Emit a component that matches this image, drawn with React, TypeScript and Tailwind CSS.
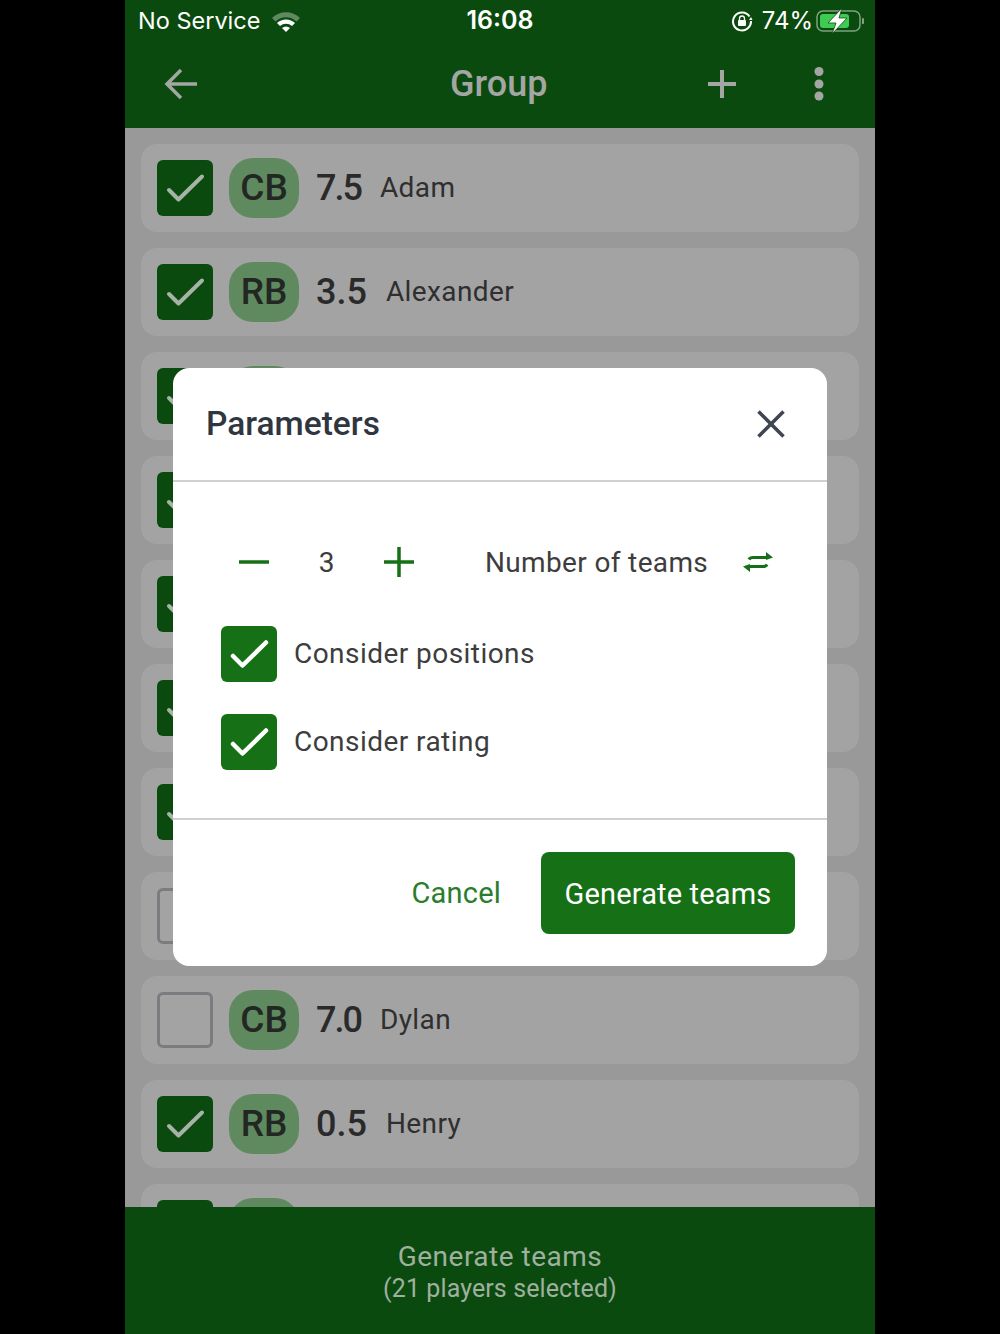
import React from 'react';

type Player = {
  checked: boolean;
  pos?: string;
  rating?: string;
  name?: string;
  tight?: boolean;
};

// rows with no text sit behind the dialog or the bottom bar
const players: Player[] = [
  { checked: true, pos: 'CB', rating: '7.5', name: 'Adam', tight: true },
  { checked: true, pos: 'RB', rating: '3.5', name: 'Alexander' },
  { checked: true },
  { checked: true },
  { checked: true },
  { checked: true },
  { checked: true },
  { checked: false },
  { checked: false, pos: 'CB', rating: '7.0', name: 'Dylan', tight: true },
  { checked: true, pos: 'RB', rating: '0.5', name: 'Henry' },
  { checked: true },
];

const Check = ({ color, width }: { color: string; width: number }) => (
  <svg viewBox="0 0 56 56" className="w-14 h-14" fill="none">
    <path d="M12 30 L21.5 39.5 L45 16.5" stroke={color} strokeWidth={width} strokeLinecap="round" strokeLinejoin="round" />
  </svg>
);

const PlayerRow = ({ player }: { player: Player }) => (
  <div className="flex items-center h-[88px] shrink-0 rounded-2xl bg-[#a3a3a3] pl-4">
    {player.checked ? (
      <div className="w-14 h-14 rounded-md bg-[#0b4a0e]">
        <Check color="#a6b3a6" width={4} />
      </div>
    ) : (
      <div className="w-14 h-14 rounded-md border-[3px] border-[#7b7b80]" />
    )}
    <div className="ml-4 w-[70px] h-[60px] rounded-[24px] bg-[#5f8a60] flex items-center justify-center text-[37px] font-medium text-[#232723]">
      {player.pos}
    </div>
    {player.rating && (
      <div className={`ml-[17px] text-[36px] font-medium text-[#2a2a2a] ${player.tight ? 'tracking-[-2px]' : ''}`}>
        {player.rating}
      </div>
    )}
    {player.name && <div className="ml-[19px] text-[28px] tracking-[0.4px] text-[#2f2f2f]">{player.name}</div>}
  </div>
);

const Option = ({ label }: { label: string }) => (
  <div className="flex items-center h-14">
    <div className="w-14 h-14 rounded-md bg-[#167016]">
      <Check color="#ffffff" width={4.5} />
    </div>
    <span className="ml-[17px] text-[28px] tracking-[0.45px] text-[#3d3d3d]">{label}</span>
  </div>
);

const StatusBar = () => (
  <div className="relative flex items-center justify-between h-[42px] pl-[13px] pr-[11px] text-white">
    <div className="flex items-center gap-[11px] text-[23.5px] font-['Inter',sans-serif]">
      No Service
      <svg viewBox="0 0 30 22" className="w-[30px] h-[22px]">
        <path d="M1 8 A20 20 0 0 1 29 8 L25.5 11.5 A15 15 0 0 0 4.5 11.5 Z" fill="#5f8a60" />
        <path d="M6 13 A13 13 0 0 1 24 13 L21 16 A9 9 0 0 0 9 16 Z" fill="#ffffff" />
        <path d="M11 18 A6 6 0 0 1 19 18 L15 22 Z" fill="#ffffff" />
      </svg>
    </div>
    <div className="absolute left-0 right-0 text-center text-[25px] font-semibold font-['Inter',sans-serif]">16:08</div>
    <div className="flex items-center text-[24px] font-['Inter',sans-serif]">
      <svg viewBox="0 0 22 22" className="w-[22px] h-[22px] mr-[9px]" fill="none">
        <path d="M18.5 6.5 A9 9 0 1 0 20 11" stroke="#ffffff" strokeWidth="2" />
        <path d="M21.5 10 L18 10 L20 7 Z" fill="#ffffff" />
        <rect x="7" y="10" width="8" height="6" rx="1" fill="#ffffff" />
        <path d="M8.5 10 V8.5 a2.5 2.5 0 0 1 5 0 V10" stroke="#ffffff" strokeWidth="1.3" />
      </svg>
      74%
      <svg viewBox="0 0 48 26" className="w-12 h-[26px] ml-[3px]" fill="none">
        <rect x="1" y="3" width="43" height="20" rx="6" stroke="#7fa37f" strokeWidth="1.5" />
        <rect x="4" y="6" width="29" height="14" rx="3" fill="#3ecb54" />
        <path d="M46 10 a3 3 0 0 1 0 6 Z" fill="#7fa37f" />
        <path d="M26 0 L12 15 H20 L16 26 L31 10 H23 Z" fill="#ffffff" stroke="#0b4a0e" strokeWidth="0.8" />
      </svg>
    </div>
  </div>
);

export default function App() {
  return (
    <div className="w-full h-[1334px] bg-black font-['Roboto',sans-serif]">
      <div className="relative w-[750px] h-[1334px] mx-auto overflow-hidden flex flex-col bg-[#999999]">
        {/* Header */}
        <div className="h-[128px] shrink-0 bg-[#0b4a0e]">
          <StatusBar />
          <div className="flex items-center h-[84px] pl-[38px] pr-[51px] text-[#a3a6a3]">
            <svg viewBox="0 0 36 36" className="w-9 h-9" fill="none" stroke="currentColor" strokeWidth="3.5">
              <path d="M34 18 H5 M18 4 L4 18 L18 32" />
            </svg>
            <div className="ml-[251px] text-[36px] font-medium">Group</div>
            <div className="flex items-center ml-auto gap-[77px]">
              <svg viewBox="0 0 30 30" className="w-[30px] h-[30px]" fill="none" stroke="currentColor" strokeWidth="4">
                <path d="M15 1 V29 M1 15 H29" />
              </svg>
              <svg viewBox="0 0 10 36" className="w-[10px] h-9" fill="currentColor">
                <circle cx="5" cy="5.5" r="4.5" />
                <circle cx="5" cy="18" r="4.5" />
                <circle cx="5" cy="30" r="4.5" />
              </svg>
            </div>
          </div>
        </div>

        {/* Players */}
        <div className="flex-1 min-h-0 overflow-hidden flex flex-col gap-4 pt-4 px-4">
          {players.map((player, i) => (
            <PlayerRow key={i} player={player} />
          ))}
        </div>

        {/* Bottom bar */}
        <div className="h-[127px] shrink-0 bg-[#0b4a0e] text-center text-[#9fb09f] pt-[33px]">
          <div className="text-[28px] leading-[33px] tracking-[0.5px]">Generate teams</div>
          <div className="pt-[1px] text-[25px] leading-[30px] tracking-[0.1px]">(21 players selected)</div>
        </div>

        {/* Dialog */}
        <div className="absolute left-12 top-[368px] w-[654px] h-[598px] rounded-2xl bg-white flex flex-col">
          <div className="flex items-center justify-between h-[112px] pl-[33px] pr-[42px] border-b-2 border-[#d0d0d0] box-content">
            <span className="text-[33.5px] font-medium text-[#2f3640]">Parameters</span>
            <svg viewBox="0 0 28 28" className="w-7 h-7" fill="none" stroke="#3f4650" strokeWidth="3.6">
              <path d="M1.5 1.5 L26.5 26.5 M26.5 1.5 L1.5 26.5" />
            </svg>
          </div>

          <div className="flex-1 min-h-0 border-b-2 border-[#d0d0d0] pl-12">
            <div className="flex items-center h-[60px] mt-[50px] text-[#3d3d3d] text-[28px]">
              <svg viewBox="0 0 30 30" className="ml-[18px] w-[30px] h-[30px]" fill="none" stroke="#167016" strokeWidth="3.5">
                <path d="M0 15 H30" />
              </svg>
              <span className="w-[115px] text-center pt-[2px]">3</span>
              <svg viewBox="0 0 30 30" className="w-[30px] h-[30px]" fill="none" stroke="#167016" strokeWidth="3.5">
                <path d="M15 0 V30 M0 15 H30" />
              </svg>
              <span className="ml-[71px] tracking-[0.35px] pt-[2px]">Number of teams</span>
              <svg viewBox="0 0 30 24" className="ml-[35px] w-[30px] h-6" fill="none" stroke="#167016" strokeWidth="3">
                <path d="M6 9.5 C7 7.5 8 7.5 10 7.5 H24" />
                <path d="M23 2 L30 7.5 L23 10 Z" fill="#167016" stroke="none" />
                <path d="M24 14.5 C23 16.5 22 16.5 20 16.5 H6" />
                <path d="M7 14 L0 16.5 L7 22 Z" fill="#167016" stroke="none" />
              </svg>
            </div>
            <div className="flex flex-col gap-8 mt-[34px]">
              <Option label="Consider positions" />
              <Option label="Consider rating" />
            </div>
          </div>

          <div className="flex items-center justify-end h-[146px] shrink-0 pr-8">
            <span className="pt-[2px] text-[29px] text-[#2a7d2c] tracking-[0.2px]">Cancel</span>
            <div className="ml-10 flex items-center justify-center w-[254px] h-[82px] pt-[3px] rounded-lg bg-[#167016] text-white text-[29px] tracking-[0.15px]">
              Generate teams
            </div>
          </div>
        </div>
      </div>
    </div>
  );
}
